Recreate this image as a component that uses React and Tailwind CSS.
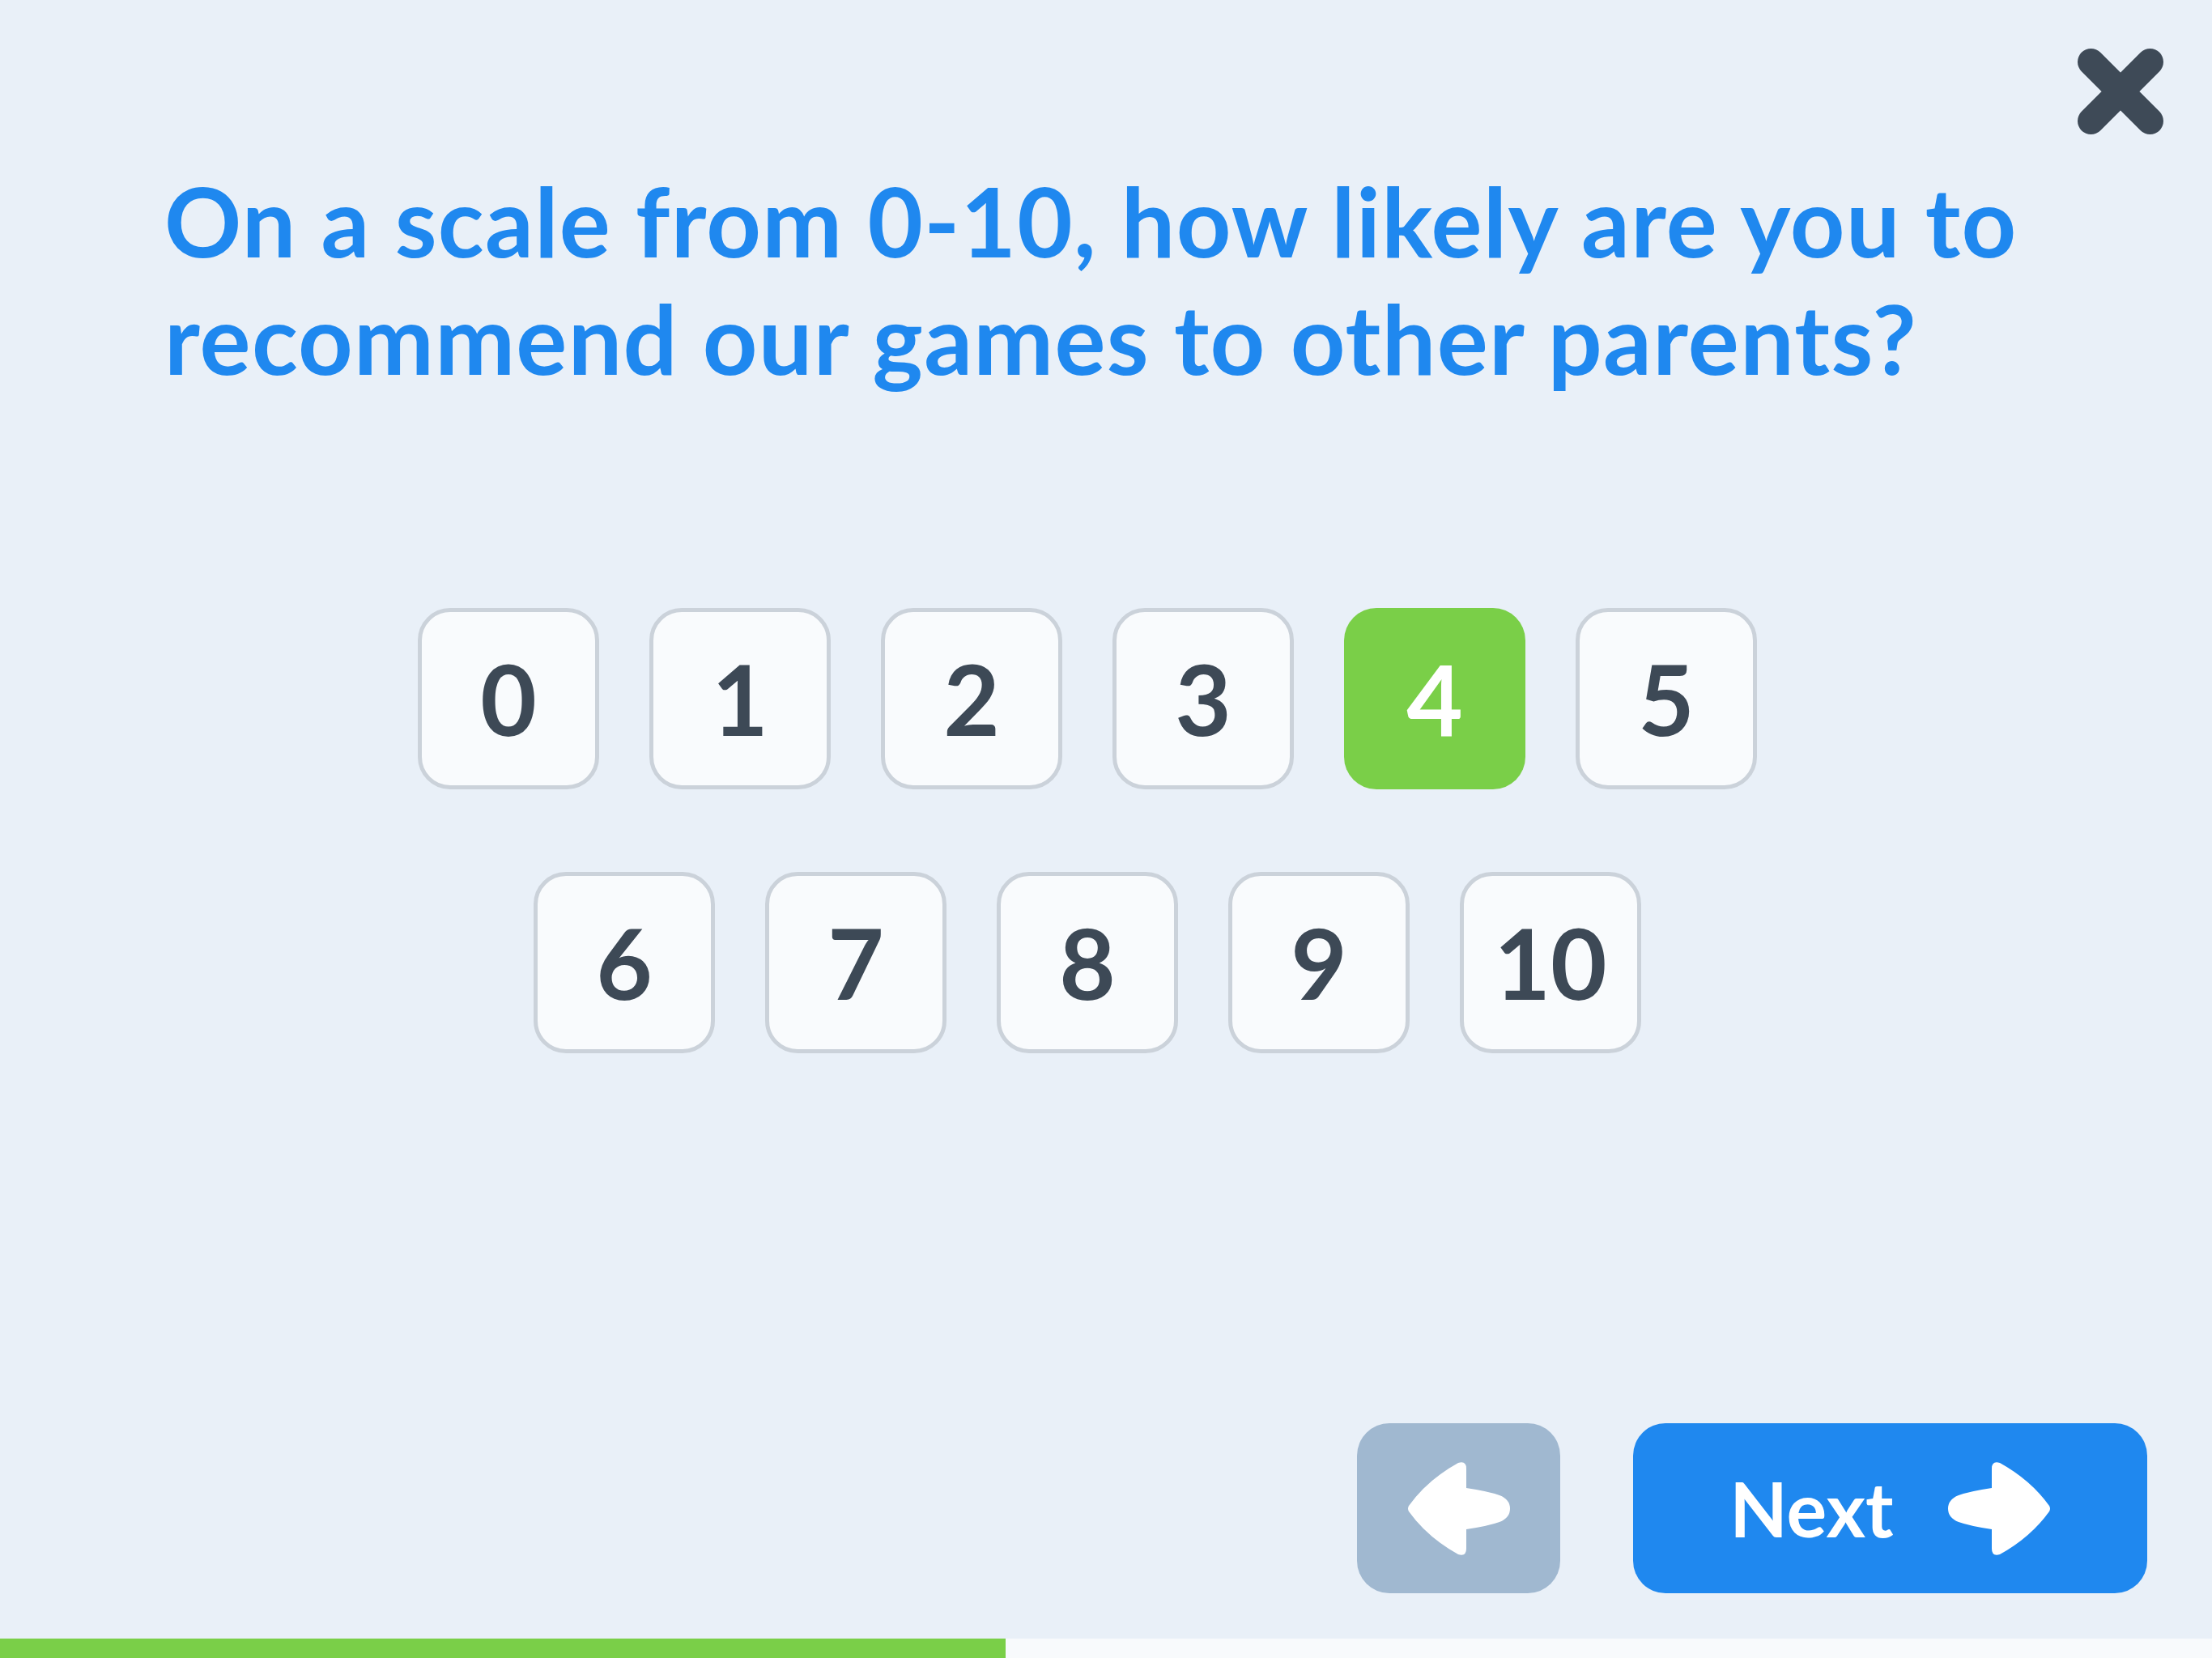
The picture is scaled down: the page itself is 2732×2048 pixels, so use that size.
import React from "react";

const font = { fontFamily: "Lato, 'Noto Sans', sans-serif" };

function Arrow({ flip = false }) {
  return (
    <svg
      viewBox="0 0 127 115"
      className={flip ? "w-[127px] h-[115px] -scale-x-100" : "w-[127px] h-[115px]"}
    >
      <path
        d="M 2 54 Q 25 22 63 1 Q 73 -2 73 8 L 73 32 Q 100 36 114 41 Q 127 46 127 57.5 Q 127 69 114 74 Q 100 79 73 83 L 73 107 Q 73 117 63 114 Q 25 93 2 61 Q 0 57.5 2 54 Z"
        fill="#ffffff"
      />
    </svg>
  );
}

function NumBox({ n, selected }) {
  if (selected) {
    return (
      <button className="w-[224px] h-[224px] rounded-[40px] bg-[#7acf48] flex items-center justify-center text-white text-[120px] font-bold leading-none">
        {n}
      </button>
    );
  }
  return (
    <button className="w-[224px] h-[224px] rounded-[40px] bg-[#f9fbfd] border-[5px] border-[#cbd2da] flex items-center justify-center text-[#3d4956] text-[120px] font-bold leading-none">
      {n}
    </button>
  );
}

export default function App() {
  return (
    <div
      className="relative w-full h-[2048px] bg-[#e9f0f8] flex flex-col overflow-hidden"
      style={font}
    >
      <button className="absolute top-[60px] right-[60px] w-[106px] h-[106px]">
        <svg viewBox="0 0 106 106" className="w-[106px] h-[106px]">
          <path
            d="M16.5 16.5 L89.5 89.5 M89.5 16.5 L16.5 89.5"
            stroke="#3e4a57"
            strokeWidth="33"
            strokeLinecap="round"
            fill="none"
          />
        </svg>
      </button>

      <h1 className="pt-[200px] pl-[203px] text-[118px] leading-[145px] font-bold text-[#1f88ef] tracking-[1.3px]">
        On a scale from 0-10, how likely are you to
        <br />
        recommend our games to other parents?
      </h1>

      <div className="mt-[261px] flex flex-col items-center gap-[102px] pr-[46px]">
        <div className="flex gap-[62px]">
          {[0, 1, 2, 3, 4, 5].map((n) => (
            <NumBox key={n} n={n} selected={n === 4} />
          ))}
        </div>
        <div className="flex gap-[62px]">
          {[6, 7, 8, 9, 10].map((n) => (
            <NumBox key={n} n={n} selected={false} />
          ))}
        </div>
      </div>

      <div className="flex-1" />

      <div className="flex justify-end gap-[90px] pr-[80px] pb-[56px]">
        <button className="w-[251px] h-[210px] rounded-[40px] bg-[#a0b8d0] flex items-center justify-center">
          <Arrow />
        </button>
        <button className="w-[635px] h-[210px] rounded-[40px] bg-[#1f88ef] flex items-center justify-center gap-[67px]">
          <span className="text-white text-[93px] font-bold leading-none">Next</span>
          <Arrow flip />
        </button>
      </div>

      <div className="h-[24px] w-full bg-[#f8fafc] flex">
        <div className="h-full bg-[#7acf48] w-[1242px]" />
      </div>
    </div>
  );
}
